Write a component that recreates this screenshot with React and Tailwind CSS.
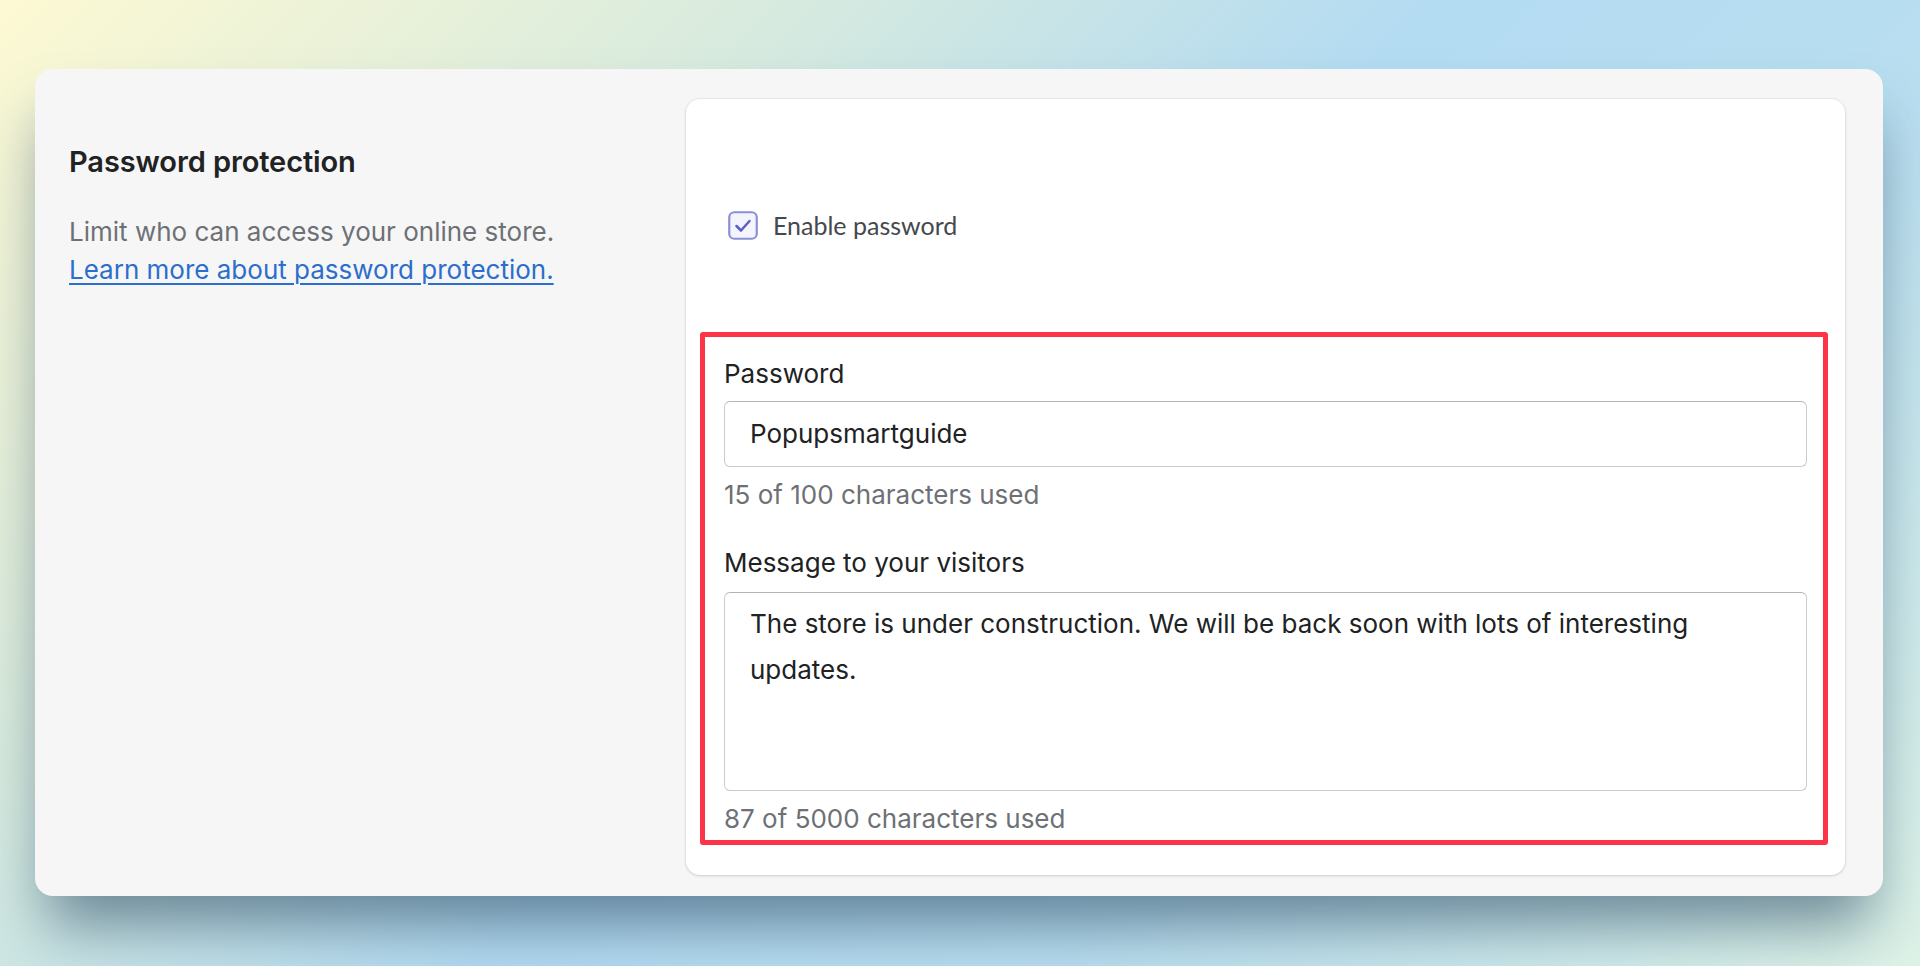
import React from "react";

export default function App() {
  return (
    <div
      className="w-[1920px] h-[966px] overflow-hidden bg-[linear-gradient(135deg,#fdf9d3_0%,#d6eadf_28%,#b3dbf2_50%,#b9def0_70%,#def3e7_100%)] pt-[69px] pl-[35px]"
      style={{ fontFamily: "Inter, 'Liberation Sans', sans-serif" }}
    >
      <div className="w-[1848px] h-[827px] bg-[#f6f6f7] rounded-[18px] shadow-[0_40px_60px_-12px_rgba(40,70,95,0.6)] flex pt-[30px] pr-[38px] pb-[21px] pl-[34px]">
        {/* Left column */}
        <div className="w-[617px] shrink-0">
          <h2 className="mt-[45px] text-[29px] leading-[36px] font-semibold text-[#202223] tracking-[-0.1px]">
            Password protection
          </h2>
          <div className="mt-[33px] text-[26px] leading-[38px]">
            <p className="text-[#6d7175]">Limit who can access your online store.</p>
            <a href="#" className="text-[#2c6ecb] underline underline-offset-[4px] decoration-[1.5px]">
              Learn more about password protection.
            </a>
          </div>
        </div>

        {/* Right card */}
        <div className="flex-1 bg-white rounded-[14px] shadow-[0_0_0_1px_rgba(63,63,68,0.05),0_1px_3px_rgba(63,63,68,0.18)] pt-[112px] pl-[14px] pr-[17px]">
          <div className="flex items-center pl-[28px] h-[28px]">
            <svg width="30" height="29" viewBox="0 0 30 29" className="shrink-0">
              <rect x="1.25" y="1.25" width="27.5" height="26.5" rx="5" fill="#f3f4fc" stroke="#8a90d8" strokeWidth="2.2" />
              <path d="M8.5 15 L13 19.5 L21.5 10" fill="none" stroke="#5a5fc8" strokeWidth="2.5" strokeLinecap="round" strokeLinejoin="round" />
            </svg>
            <span
              className="ml-[15px] text-[25px] leading-[28px] text-[#45484d]"
              style={{ fontFamily: "Lato, 'Noto Sans', sans-serif" }}
            >
              Enable password
            </span>
          </div>

          {/* Red highlighted box */}
          <div className="mt-[93px] h-[513px] border-[5px] border-[#fd3448] rounded-[3px] pt-[21px] pl-[19px] pr-[16px] text-[26px] leading-[32px]">
            <div className="text-[#202223]">Password</div>
            <div className="mt-[11px] h-[66px] rounded-[6px] border border-[#c9cccf] border-t-[#aeb4b9] flex items-center pl-[25px] text-[#202223]">
              Popupsmartguide
            </div>
            <div className="mt-[11.5px] text-[#6d7175]">15 of 100 characters used</div>
            <div className="mt-[36px] text-[#202223]">Message to your visitors</div>
            <div className="mt-[13px] h-[199px] rounded-[6px] border border-[#c9cccf] border-t-[#aeb4b9] pt-[8.5px] pl-[25px] pr-[20px] leading-[46px] text-[#202223]">
              The store is under construction. We will be back soon with lots of interesting
              <br />
              updates.
            </div>
            <div className="mt-[12px] text-[#6d7175]">87 of 5000 characters used</div>
          </div>
        </div>
      </div>
    </div>
  );
}
